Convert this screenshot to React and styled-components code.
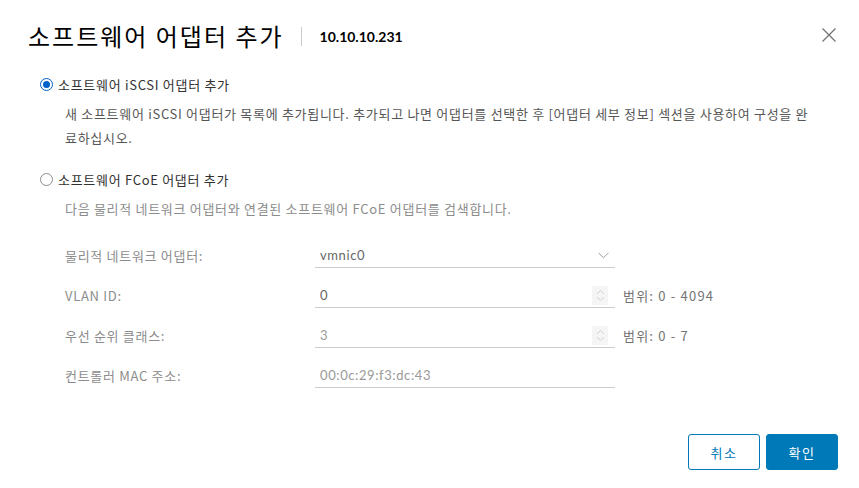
import React from 'react';
import styled, { createGlobalStyle } from 'styled-components';

const Global = createGlobalStyle`
  html, body {
    margin: 0;
    padding: 0;
    background: #fff;
  }
  body {
    font-family: "Noto Sans CJK KR", "Noto Sans", sans-serif;
    -webkit-font-smoothing: antialiased;
  }
`;

const Dialog = styled.div`
  width: 859px;
  height: 488px;
  box-sizing: border-box;
  display: flex;
  flex-direction: column;
  background: #fff;
`;

const Header = styled.div`
  display: flex;
  align-items: center;
  height: 70px;
  padding: 0 22px 0 28px;
`;

const Title = styled.h3`
  margin: 0;
  font-size: 24px;
  font-weight: 400;
  color: #000;
  letter-spacing: 2px;
`;

const Divider = styled.span`
  width: 1px;
  height: 19px;
  background: #ccc;
  margin: 2px 18px 0 17px;
`;

const Host = styled.span`
  font-family: "Lato", "Noto Sans CJK KR", sans-serif;
  font-size: 14px;
  font-weight: 700;
  color: #000;
  margin-top: 2px;
`;

const Close = styled.button`
  margin-left: auto;
  border: 0;
  background: none;
  padding: 0;
  width: 16px;
  height: 16px;
  display: flex;
  cursor: pointer;
`;

const Body = styled.div`
  flex: 1;
  padding: 2px 0 0 40px;
  display: flex;
  flex-direction: column;
`;

const Option = styled.label`
  display: flex;
  align-items: center;
  height: 24px;
  font-size: 13px;
  letter-spacing: 0.7px;
  color: #313131;
`;

const Radio = styled.span`
  width: 13px;
  height: 13px;
  border-radius: 50%;
  box-sizing: border-box;
  border: 1px solid ${p => (p.checked ? '#0061c8' : '#8c8c8c')};
  margin-right: 5px;
  position: relative;
  background: #fff;
  &::after {
    content: '';
    display: ${p => (p.checked ? 'block' : 'none')};
    position: absolute;
    inset: 2px;
    border-radius: 50%;
    background: #0061c8;
  }
`;

const Desc = styled.p`
  margin: 6px 0 0 25px;
  padding-right: 42px;
  font-size: 13px;
  line-height: 24px;
  letter-spacing: 0.7px;
  color: ${p => (p.muted ? '#8c8c8c' : '#565656')};
`;

const Section = styled.div`
  margin-top: ${p => p.gap || 0}px;
`;

const Form = styled.div`
  margin: 22px 0 0 25px;
  display: grid;
  grid-template-columns: 250px 300px auto;
  row-gap: 15px;
  align-items: center;
`;

const Label = styled.span`
  font-size: 13px;
  letter-spacing: 0.7px;
  color: #8c8c8c;
`;

const Field = styled.div`
  height: 24px;
  border-bottom: 1px solid #ccc;
  display: flex;
  align-items: center;
  padding: 0 6px 0 5px;
  font-family: "Lato", "Noto Sans CJK KR", sans-serif;
  font-size: 13px;
  letter-spacing: 0.6px;
  color: ${p => (p.dark ? '#666' : '#999')};
`;

const Value = styled.span`
  flex: 1;
`;

const Spinner = styled.span`
  width: 16px;
  height: 19px;
  background: #f5f5f5;
  display: flex;
  align-items: center;
  justify-content: center;
  margin-right: 1px;
`;

const Range = styled.span`
  font-size: 13px;
  letter-spacing: 1.2px;
  color: #737373;
  padding-left: 8px;
`;

const Footer = styled.div`
  display: flex;
  justify-content: flex-end;
  gap: 6px;
  padding: 0 21px 18px 0;
`;

const Button = styled.button`
  width: 72px;
  height: 36px;
  box-sizing: border-box;
  border-radius: 3px;
  border: 1px solid #0079b8;
  background: ${p => (p.primary ? '#0079b8' : '#fff')};
  color: ${p => (p.primary ? '#fff' : '#0079b8')};
  font-family: "Noto Sans CJK KR", sans-serif;
  font-size: 13px;
  letter-spacing: 1.5px;
  cursor: pointer;
`;

const Chevron = () => (
  <svg width="11" height="7" viewBox="0 0 11 7" fill="none" stroke="#999" strokeWidth="1">
    <path d="M0.5 0.8 L5.5 5.8 L10.5 0.8" />
  </svg>
);

const Arrows = () => (
  <svg width="9" height="13" viewBox="0 0 9 13" fill="none" stroke="#d0d0d0" strokeWidth="1">
    <path d="M1 5 L4.5 1.5 L8 5" />
    <path d="M1 8 L4.5 11.5 L8 8" />
  </svg>
);

const rows = [
  { label: '물리적 네트워크 어댑터:', value: 'vmnic0', select: true, dark: true },
  { label: 'VLAN ID:', value: '0', spin: true, range: '범위: 0 - 4094', dark: true },
  { label: '우선 순위 클래스:', value: '3', spin: true, range: '범위: 0 - 7' },
  { label: '컨트롤러 MAC 주소:', value: '00:0c:29:f3:dc:43' },
];

export default function App() {
  return (
    <Dialog>
      <Global />
      <Header>
        <Title>소프트웨어 어댑터 추가</Title>
        <Divider />
        <Host>10.10.10.231</Host>
        <Close aria-label="닫기">
          <svg width="16" height="16" viewBox="0 0 16 16" stroke="#737373" strokeWidth="1.3">
            <path d="M1.5 1.5 L14.5 14.5 M14.5 1.5 L1.5 14.5" />
          </svg>
        </Close>
      </Header>
      <Body>
        <Section>
          <Option><Radio checked />소프트웨어 iSCSI 어댑터 추가</Option>
          <Desc>
            새 소프트웨어 iSCSI 어댑터가 목록에 추가됩니다. 추가되고 나면 어댑터를 선택한 후 [어댑터 세부 정보] 섹션을 사용하여 구성을 완료하십시오.
          </Desc>
        </Section>
        <Section gap={17}>
          <Option><Radio />소프트웨어 FCoE 어댑터 추가</Option>
          <Desc muted>다음 물리적 네트워크 어댑터와 연결된 소프트웨어 FCoE 어댑터를 검색합니다.</Desc>
          <Form>
            {rows.map(r => (
              <React.Fragment key={r.label}>
                <Label>{r.label}</Label>
                <Field dark={r.dark}>
                  <Value>{r.value}</Value>
                  {r.select && <Chevron />}
                  {r.spin && <Spinner><Arrows /></Spinner>}
                </Field>
                <Range>{r.range}</Range>
              </React.Fragment>
            ))}
          </Form>
        </Section>
      </Body>
      <Footer>
        <Button>취소</Button>
        <Button primary>확인</Button>
      </Footer>
    </Dialog>
  );
}
